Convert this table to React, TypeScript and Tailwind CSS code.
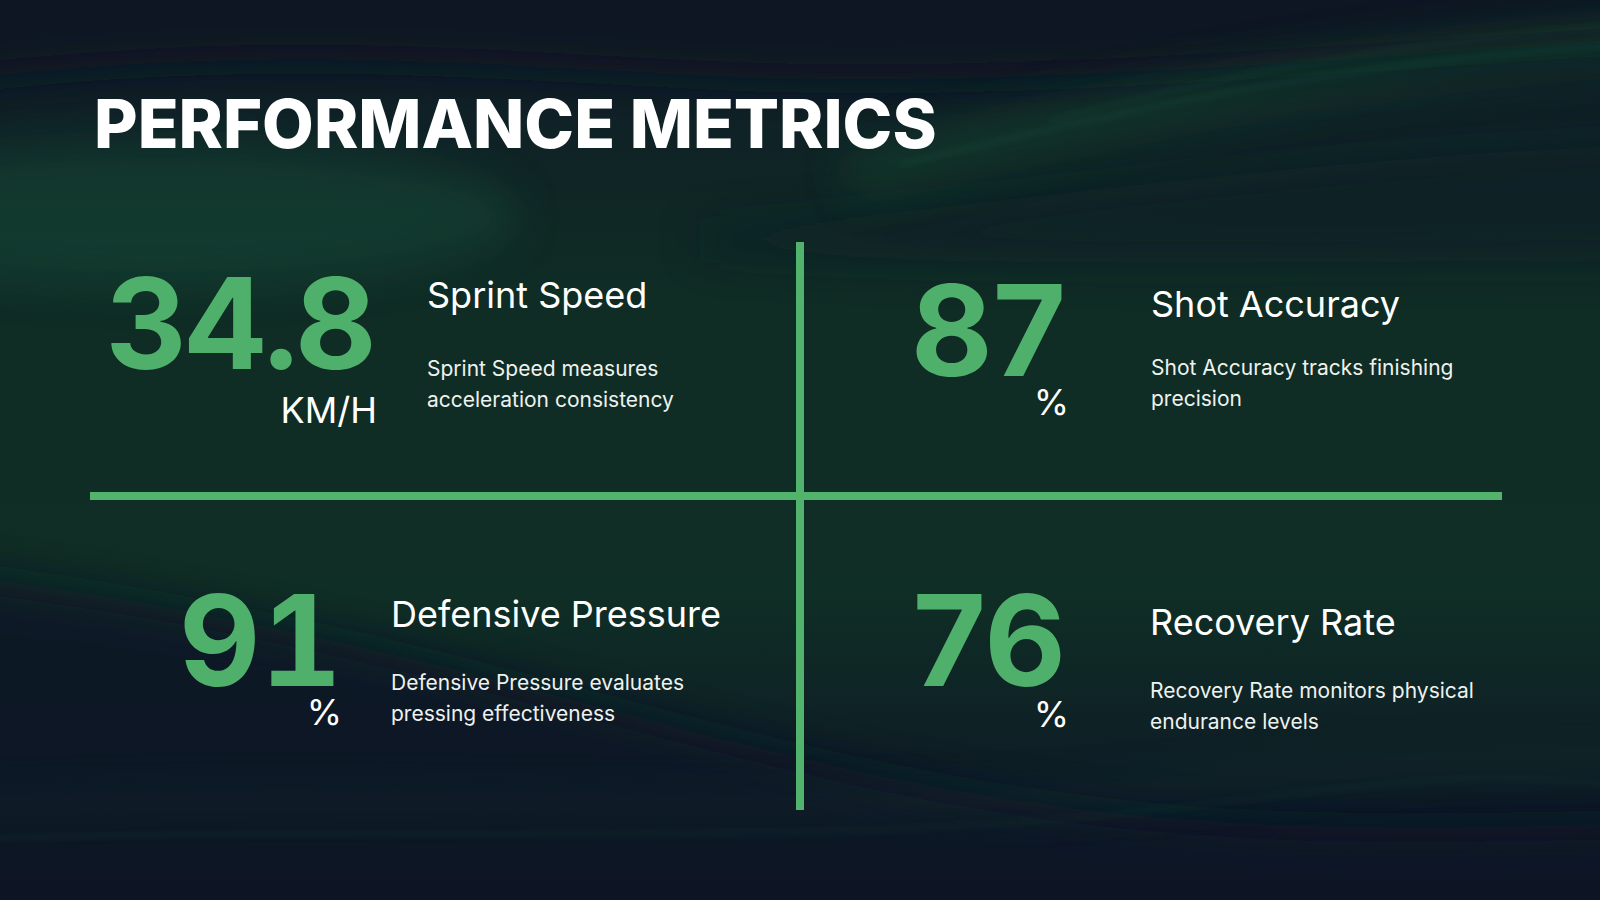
import React from 'react';

type Metric = {
  value: string;
  unit: string;
  title: string;
  lines: string[];
  cell: string;
  valueBox: string;
  numText: string;
  unitBox: string;
  textBox: string;
  descBox: string;
};

const metrics: Metric[] = [
  {
    value: '34.8',
    unit: 'KM/H',
    title: 'Sprint Speed',
    lines: ['Sprint Speed measures', 'acceleration consistency'],
    cell: 'col-start-1 row-start-1',
    valueBox: 'mt-[28px] w-[283px]',
    numText: 'tracking-[-0.03em]',
    unitBox: 'mt-[15px] mr-[-4px]',
    textBox: 'mt-[35px] ml-[54px]',
    descBox: 'mt-[40px]',
  },
  {
    value: '87',
    unit: '%',
    title: 'Shot Accuracy',
    lines: ['Shot Accuracy tracks finishing', 'precision'],
    cell: 'col-start-3 row-start-1',
    valueBox: 'mt-[35px] w-[262px]',
    numText: 'tracking-normal',
    unitBox: 'mt-0 mr-[-3px]',
    textBox: 'mt-[44px] ml-[85px]',
    descBox: 'mt-[30px]',
  },
  {
    value: '91',
    unit: '%',
    title: 'Defensive Pressure',
    lines: ['Defensive Pressure evaluates', 'pressing effectiveness'],
    cell: 'col-start-1 row-start-3',
    valueBox: 'mt-[87px] w-[252px]',
    numText: 'tabular-nums',
    unitBox: 'mt-0',
    textBox: 'mt-[96px] ml-[49px]',
    descBox: 'mt-[35px]',
  },
  {
    value: '76',
    unit: '%',
    title: 'Recovery Rate',
    lines: ['Recovery Rate monitors physical', 'endurance levels'],
    cell: 'col-start-3 row-start-3',
    valueBox: 'mt-[87px] w-[262px]',
    numText: 'tracking-normal',
    unitBox: 'mt-[2px] mr-[-3px]',
    textBox: 'mt-[104px] ml-[84px]',
    descBox: 'mt-[35px]',
  },
];

// soft green waves behind the slide
const Backdrop: React.FC = () => (
  <svg className="absolute inset-0 h-full w-full" viewBox="0 0 1600 900" preserveAspectRatio="none">
    <defs>
      <linearGradient id="base" x1="0" y1="0" x2="0" y2="1">
        <stop offset="0" stopColor="#0f1727" />
        <stop offset="0.14" stopColor="#0f2226" />
        <stop offset="0.32" stopColor="#0f2c25" />
        <stop offset="0.66" stopColor="#0f2e25" />
        <stop offset="0.88" stopColor="#0e1b26" />
        <stop offset="1" stopColor="#0d1424" />
      </linearGradient>
      <filter id="soft" x="-20%" y="-50%" width="140%" height="200%">
        <feGaussianBlur stdDeviation="22" />
      </filter>
      <filter id="thin" x="-20%" y="-50%" width="140%" height="200%">
        <feGaussianBlur stdDeviation="3" />
      </filter>
    </defs>
    <rect width="1600" height="900" fill="url(#base)" />
    <path d="M-200 -100 H1800 V30 C1300 60 1000 90 700 75 S200 40 -200 100 Z" fill="#0d1323" filter="url(#soft)" />
    <path d="M700 230 C1000 210 1300 150 1800 140 V260 C1300 260 1000 270 700 250 Z" fill="#0e1d27" opacity="0.5" filter="url(#soft)" />
    <ellipse cx="160" cy="215" rx="360" ry="70" fill="#15503a" opacity="0.45" filter="url(#soft)" />
    <path d="M850 175 C1100 115 1350 55 1800 30" stroke="#16492f" strokeWidth="40" fill="none" opacity="0.55" filter="url(#soft)" />
    <path d="M900 165 C1120 110 1360 55 1700 40" stroke="#2c7a4a" strokeWidth="2" fill="none" opacity="0.35" filter="url(#thin)" />
    <path d="M1050 120 C1250 70 1420 35 1700 20" stroke="#2c7a4a" strokeWidth="2" fill="none" opacity="0.25" filter="url(#thin)" />
    <path d="M-200 560 C300 600 600 720 900 780 S1400 830 1800 820 V1100 H-200 Z" fill="#0d1525" opacity="0.85" filter="url(#soft)" />
    <path d="M-200 815 C400 780 800 830 1200 785 S1500 770 1800 750" stroke="#1f5a3a" strokeWidth="10" fill="none" opacity="0.4" filter="url(#soft)" />
    <path d="M-100 842 C400 820 800 855 1200 805 S1500 795 1700 780" stroke="#2a6d45" strokeWidth="2" fill="none" opacity="0.25" filter="url(#thin)" />
  </svg>
);

const MetricCell: React.FC<{ m: Metric }> = ({ m }) => (
  <div className={`${m.cell} flex items-start`}>
    <div className={`${m.valueBox} flex shrink-0 flex-col items-end`}>
      <span className={`${m.numText} text-[126px] font-bold leading-[0.85] text-[#4fb06b]`}>{m.value}</span>
      <span className={`${m.unitBox} text-[36px] leading-none text-white`}>{m.unit}</span>
    </div>
    <div className={`${m.textBox} flex flex-col`}>
      <h2 className="whitespace-nowrap text-[36px] leading-none text-white">{m.title}</h2>
      <p className={`${m.descBox} whitespace-nowrap text-[21px] leading-[31px] text-[#eef2ef]`}>
        {m.lines[0]}
        <br />
        {m.lines[1]}
      </p>
    </div>
  </div>
);

const App: React.FC = () => {
  return (
    <div className="relative h-[900px] w-full overflow-hidden bg-[#0e1424] font-['Inter','Liberation_Sans',sans-serif]">
      <Backdrop />
      <div className="relative flex flex-col pl-[90px] pt-[90px]">
        <h1 className="ml-[4px] text-[67px] font-extrabold uppercase leading-none text-white">
          Performance Metrics
        </h1>

        <div className="mt-[85px] grid grid-cols-[706px_8px_698px] grid-rows-[250px_8px_310px]">
          <div className="col-start-2 row-span-3 row-start-1 bg-[#52b46c]" />
          <div className="col-span-3 col-start-1 row-start-2 bg-[#52b46c]" />
          {metrics.map((m) => (
            <MetricCell key={m.title} m={m} />
          ))}
        </div>
      </div>
    </div>
  );
};

export default App;
